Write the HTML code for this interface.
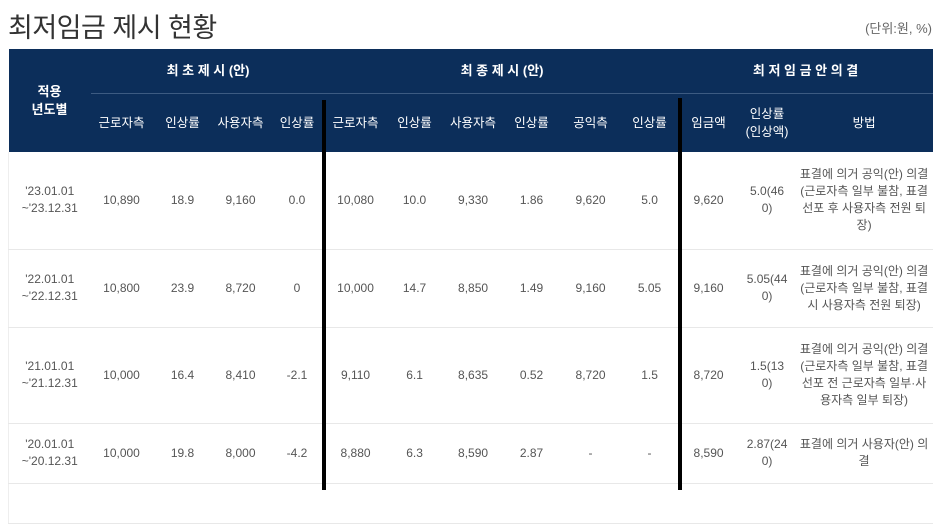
<!DOCTYPE html>
<html><head><meta charset="utf-8"><style>
*{margin:0;padding:0;box-sizing:border-box}
body{width:934px;height:490px;overflow:hidden;background:#fff;font-family:"Liberation Sans","Noto Sans CJK KR",sans-serif;position:relative}
.title{position:absolute;left:8px;top:6px;font-size:27px;color:#333;letter-spacing:-0.5px}
.unit{position:absolute;right:2px;top:18px;font-size:13px;color:#666}
table{position:absolute;left:8px;top:49px;width:924px;border-collapse:collapse;table-layout:fixed}
th{background:#0c2e5a;color:#fff;font-size:12.5px;font-weight:bold;text-align:center;line-height:18px}
td{font-size:12px;color:#555;text-align:center;line-height:17px;border-bottom:1px solid #e8e8e8;padding:0 2px}
td.f{border-left:1px solid #eee}
.g th{height:44px;font-size:13px}
.s th{height:59px;border-top:1px solid #3d5b82;font-weight:normal}
.bar{position:absolute;width:4px;background:#000;bottom:0}
</style></head><body>
<div class="title">최저임금 제시 현황</div>
<div class="unit">(단위:원, %)</div>
<table>
<colgroup><col style="width:82px"><col style="width:62px"><col style="width:60px"><col style="width:56px"><col style="width:57px"><col style="width:60px"><col style="width:58px"><col style="width:59px"><col style="width:58px"><col style="width:60px"><col style="width:58px"><col style="width:60px"><col style="width:57px"><col style="width:137px"></colgroup>
<tr class="g"><th rowspan="2" style="font-weight:bold">적용<br>년도별</th><th colspan="4">최 초 제 시 (안)</th><th colspan="6">최 종 제 시 (안)</th><th colspan="3">최 저 임 금 안 의 결</th></tr>
<tr class="s"><th>근로자측</th><th>인상률</th><th>사용자측</th><th>인상률</th><th>근로자측</th><th>인상률</th><th>사용자측</th><th>인상률</th><th>공익측</th><th>인상률</th><th>임금액</th><th>인상률<br>(인상액)</th><th>방법</th></tr>
<tr style="height:97px"><td class="f">'23.01.01<br>~'23.12.31</td><td>10,890</td><td>18.9</td><td>9,160</td><td>0.0</td><td>10,080</td><td>10.0</td><td>9,330</td><td>1.86</td><td>9,620</td><td>5.0</td><td>9,620</td><td>5.0(46<br>0)</td><td>표결에 의거 공익(안) 의결(근로자측 일부 불참, 표결 선포 후 사용자측 전원 퇴장)</td></tr>
<tr style="height:78px"><td class="f">'22.01.01<br>~'22.12.31</td><td>10,800</td><td>23.9</td><td>8,720</td><td>0</td><td>10,000</td><td>14.7</td><td>8,850</td><td>1.49</td><td>9,160</td><td>5.05</td><td>9,160</td><td>5.05(44<br>0)</td><td>표결에 의거 공익(안) 의결(근로자측 일부 불참, 표결 시 사용자측 전원 퇴장)</td></tr>
<tr style="height:96px"><td class="f">'21.01.01<br>~'21.12.31</td><td>10,000</td><td>16.4</td><td>8,410</td><td>-2.1</td><td>9,110</td><td>6.1</td><td>8,635</td><td>0.52</td><td>8,720</td><td>1.5</td><td>8,720</td><td>1.5(13<br>0)</td><td>표결에 의거 공익(안) 의결(근로자측 일부 불참, 표결 선포 전 근로자측 일부·사용자측 일부 퇴장)</td></tr>
<tr style="height:60px"><td class="f">'20.01.01<br>~'20.12.31</td><td>10,000</td><td>19.8</td><td>8,000</td><td>-4.2</td><td>8,880</td><td>6.3</td><td>8,590</td><td>2.87</td><td>-</td><td>-</td><td>8,590</td><td>2.87(24<br>0)</td><td>표결에 의거 사용자(안) 의결</td></tr>
<tr style="height:40px"><td class="f"></td><td></td><td></td><td></td><td></td><td></td><td></td><td></td><td></td><td></td><td></td><td></td><td></td><td></td></tr>
</table>
<div class="bar" style="left:322px;top:100px"></div>
<div class="bar" style="left:678px;top:98px"></div>
</body></html>
